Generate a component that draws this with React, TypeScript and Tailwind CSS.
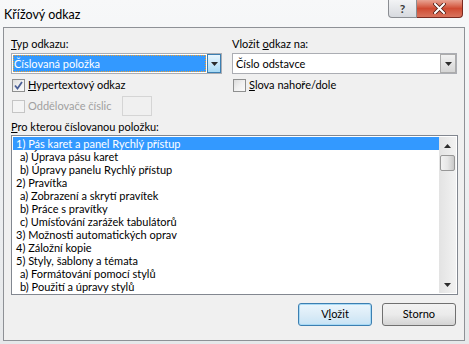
import React from "react"

const font = { fontFamily: "Lato, 'Noto Sans', sans-serif" }

const items: { text: string; sub?: boolean }[] = [
  { text: "1) Pás karet a panel Rychlý přístup" },
  { text: "a) Úprava pásu karet", sub: true },
  { text: "b) Úpravy panelu Rychlý přístup", sub: true },
  { text: "2) Pravítka" },
  { text: "a) Zobrazení a skrytí pravítek", sub: true },
  { text: "b) Práce s pravítky", sub: true },
  { text: "c) Umísťování zarážek tabulátorů", sub: true },
  { text: "3) Možnosti automatických oprav" },
  { text: "4) Záložní kopie" },
  { text: "5) Styly, šablony a témata" },
  { text: "a) Formátování pomocí stylů", sub: true },
  { text: "b) Použití a úpravy stylů", sub: true },
]

function Arrow({ up }: { up?: boolean }) {
  return (
    <svg width="7" height="4" viewBox="0 0 7 4">
      <path d={up ? "M0 4 L3.5 0 L7 4 Z" : "M0 0 L7 0 L3.5 4 Z"} fill="#2b2b2b" />
    </svg>
  )
}

function Checkbox({ checked, disabled }: { checked?: boolean; disabled?: boolean }) {
  return (
    <div
      className={`w-[13px] h-[13px] border flex items-center justify-center shrink-0 ${
        disabled ? "border-[#c5c5c5] bg-[#f4f4f4]" : "border-[#8e8f8f] bg-gradient-to-br from-[#dcdcdc] via-[#f0f0f0] to-[#fafafa]"
      }`}
    >
      {checked && (
        <svg width="9" height="9" viewBox="0 0 9 9">
          <path d="M1 4.5 L3.5 7.5 L8 1" stroke="#4a5f97" strokeWidth="1.8" fill="none" />
        </svg>
      )}
    </div>
  )
}

export default function App() {
  return (
    <div
      className="w-[469px] h-[344px] bg-gradient-to-b from-[#f7f8f9] via-[#eef0f2] to-[#e6e8ea] text-[11px] text-black overflow-hidden"
      style={font}
    >
      {/* title bar */}
      <div className="h-[27px] flex items-start">
        <div className="pl-[4px] pt-[7px] text-[12.5px] leading-[15px]">Křížový odkaz</div>
        <div className="ml-auto mr-[6px] flex">
          <div className="w-[29px] h-[18px] border border-[#8a8d92] border-t-0 rounded-bl-[4px] bg-gradient-to-b from-[#f2f3f5] to-[#d7dadf] flex items-center justify-center text-[#3a3a3a] text-[12px] font-bold">
            ?
          </div>
          <div className="w-[46px] h-[18px] border border-[#7a2a20] border-t-0 border-l-0 rounded-br-[4px] bg-gradient-to-b from-[#e8a393] via-[#cf4a32] to-[#d8735d] flex items-center justify-center">
            <svg width="13" height="11" viewBox="0 0 13 11">
              <path d="M2 1 L11 10 M11 1 L2 10" stroke="#4b1d16" strokeWidth="3.6" strokeLinecap="round" />
              <path d="M2 1 L11 10 M11 1 L2 10" stroke="#ffffff" strokeWidth="2" strokeLinecap="round" />
            </svg>
          </div>
        </div>
      </div>

      {/* client area */}
      <div className="ml-[3px] w-[462px] h-[314px] border border-[#8e9196] bg-[#f0f0f0] px-[7px] pt-[8px]">
        <div className="flex gap-[10px]">
          {/* left column */}
          <div className="w-[211px]">
            <div className="h-[16px] leading-[15px]">
              <span className="underline">T</span>yp odkazu:
            </div>
            <div className="mt-[1px] h-[21px] border border-[#abadb3] bg-white flex p-[1px]">
              <div className="flex-1 bg-[#3399ff] text-white leading-[17px] pl-[1px] outline-1 outline-dotted outline-[#f0a030] -outline-offset-1">
                Číslovaná položka
              </div>
              <div className="w-[14px] ml-[1px] -my-[1px] -mr-[1px] border border-[#3c7fb1] bg-gradient-to-b from-[#eaf6fd] to-[#a7d9f5] flex items-center justify-center">
                <Arrow />
              </div>
            </div>
            <div className="mt-[5px] flex items-center gap-[3px] h-[13px]">
              <div className="ml-[1px]">
                <Checkbox checked />
              </div>
              <span>
                <span className="underline">H</span>ypertextový odkaz
              </span>
            </div>
            <div className="mt-[4px] flex items-center h-[20px]">
              <div className="ml-[1px] flex items-center gap-[3px] w-[110px]">
                <Checkbox disabled />
                <span className="text-[#a0a0a0]">Oddělovače číslic</span>
              </div>
              <div className="w-[30px] h-[20px] border border-[#d5d5d5] bg-[#f0f0f0]" />
            </div>
          </div>

          {/* right column */}
          <div className="w-[225px]">
            <div className="h-[16px] leading-[15px]">
              Vložit <span className="underline">o</span>dkaz na:
            </div>
            <div className="mt-[1px] h-[21px] border border-[#abadb3] bg-white flex">
              <div className="flex-1 leading-[19px] pl-[3px]">Číslo odstavce</div>
              <div className="w-[16px] border border-[#acacac] bg-gradient-to-b from-[#f2f2f2] to-[#d5d5d5] flex items-center justify-center">
                <Arrow />
              </div>
            </div>
            <div className="mt-[5px] flex items-center gap-[3px] h-[13px]">
              <div className="ml-[1px]">
                <Checkbox />
              </div>
              <span>
                <span className="underline">S</span>lova nahoře/dole
              </span>
            </div>
          </div>
        </div>

        <div className="mt-[3px] h-[15px] leading-[15px]">
          <span className="underline">P</span>ro kterou číslovanou položku:
        </div>

        {/* list */}
        <div className="mt-[1px] w-[447px] h-[160px] border border-[#828790] bg-white flex p-[1px]">
          <div className="flex-1 overflow-hidden">
            {items.map((it, i) => (
              <div
                key={i}
                className={`h-[13px] leading-[13px] whitespace-nowrap ${it.sub ? "pl-[7px]" : "pl-[3px]"} ${
                  i === 0 ? "bg-[#3399ff] text-white" : ""
                }`}
              >
                {it.text}
              </div>
            ))}
          </div>
          <div className="w-[17px] bg-gradient-to-r from-[#e3e3e3] to-[#f2f2f2] flex flex-col items-center">
            <div className="h-[18px] flex items-center justify-center">
              <Arrow up />
            </div>
            <div className="w-[15px] h-[16px] rounded-[2px] border border-[#979797] bg-gradient-to-r from-[#f2f2f2] via-[#e6e6e6] to-[#c9c9c9]" />
            <div className="flex-1" />
            <div className="h-[17px] flex items-center justify-center">
              <Arrow />
            </div>
          </div>
        </div>

        {/* buttons */}
        <div className="mt-[8px] flex justify-end gap-[10px] pr-[1px]">
          <div className="w-[74px] h-[23px] rounded-[3px] border border-[#3c7fb1] bg-gradient-to-b from-[#eaf6fd] via-[#dcecf7] to-[#c7e3f5] shadow-[inset_0_0_0_1px_#a7d9f5] flex items-center justify-center">
            V<span className="underline">l</span>ožit
          </div>
          <div className="w-[74px] h-[23px] rounded-[3px] border border-[#707070] bg-gradient-to-b from-[#f2f2f2] via-[#ebebeb] to-[#d4d4d4] flex items-center justify-center">
            Storno
          </div>
        </div>
      </div>
    </div>
  )
}
